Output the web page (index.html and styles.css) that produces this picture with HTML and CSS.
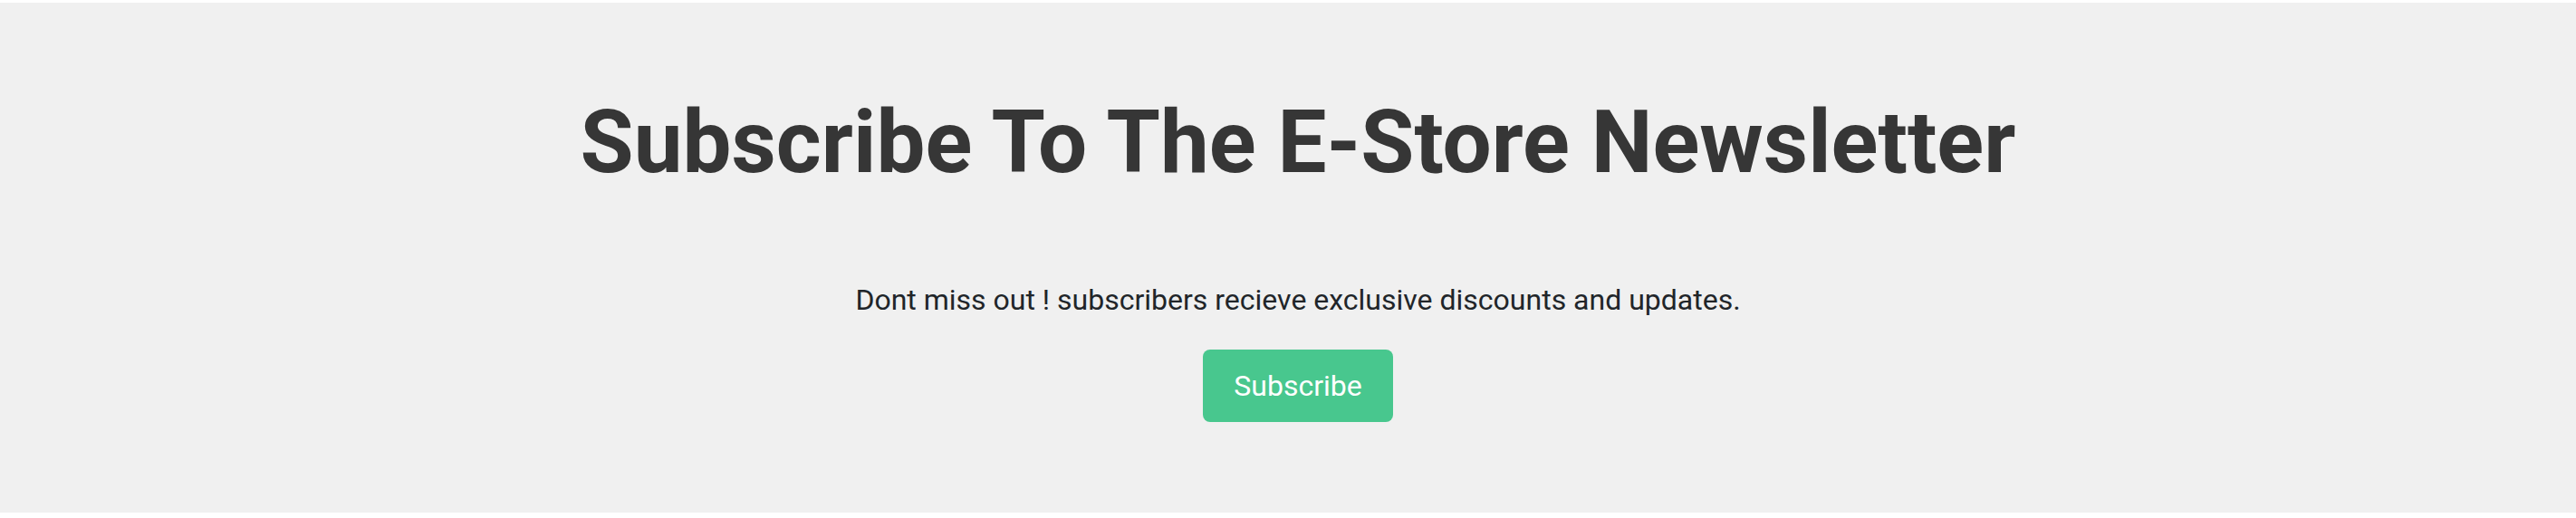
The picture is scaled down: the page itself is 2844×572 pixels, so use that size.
FILE: index.html
```html
<!DOCTYPE html>
<html lang="en">
<head>
<meta charset="utf-8">
<title>E-Store Newsletter</title>
<link rel="stylesheet" href="styles.css">
</head>
<body>
<section class="newsletter">
  <h1 class="newsletter-title">Subscribe To The E-Store Newsletter</h1>
  <p class="newsletter-text">Dont miss out ! subscribers recieve exclusive discounts and updates.</p>
  <button class="newsletter-button" type="button">Subscribe</button>
</section>
</body>
</html>
```
FILE: styles.css
```css
html, body {
  margin: 0;
  padding: 0;
  background: #ffffff;
}

body {
  font-family: Roboto, "Liberation Sans", Arial, sans-serif;
}

.newsletter {
  margin-top: 3px;
  background: #f0f0f0;
  padding: 100px 38px 100px 60px;
  display: flex;
  flex-direction: column;
  align-items: center;
  text-align: center;
}

.newsletter-title {
  margin: 0 0 96px;
  font-size: 96px;
  line-height: 108px;
  font-weight: 700;
  color: #363636;
}

.newsletter-text {
  margin: 0 0 31px;
  font-size: 32px;
  line-height: 48px;
  color: #212529;
}

.newsletter-button {
  height: 80px;
  padding: 0 32px;
  border: 2px solid transparent;
  border-radius: 8px;
  background: #48c78e;
  color: #ffffff;
  font-family: inherit;
  font-size: 32px;
  line-height: 1.5;
  cursor: pointer;
}
```
